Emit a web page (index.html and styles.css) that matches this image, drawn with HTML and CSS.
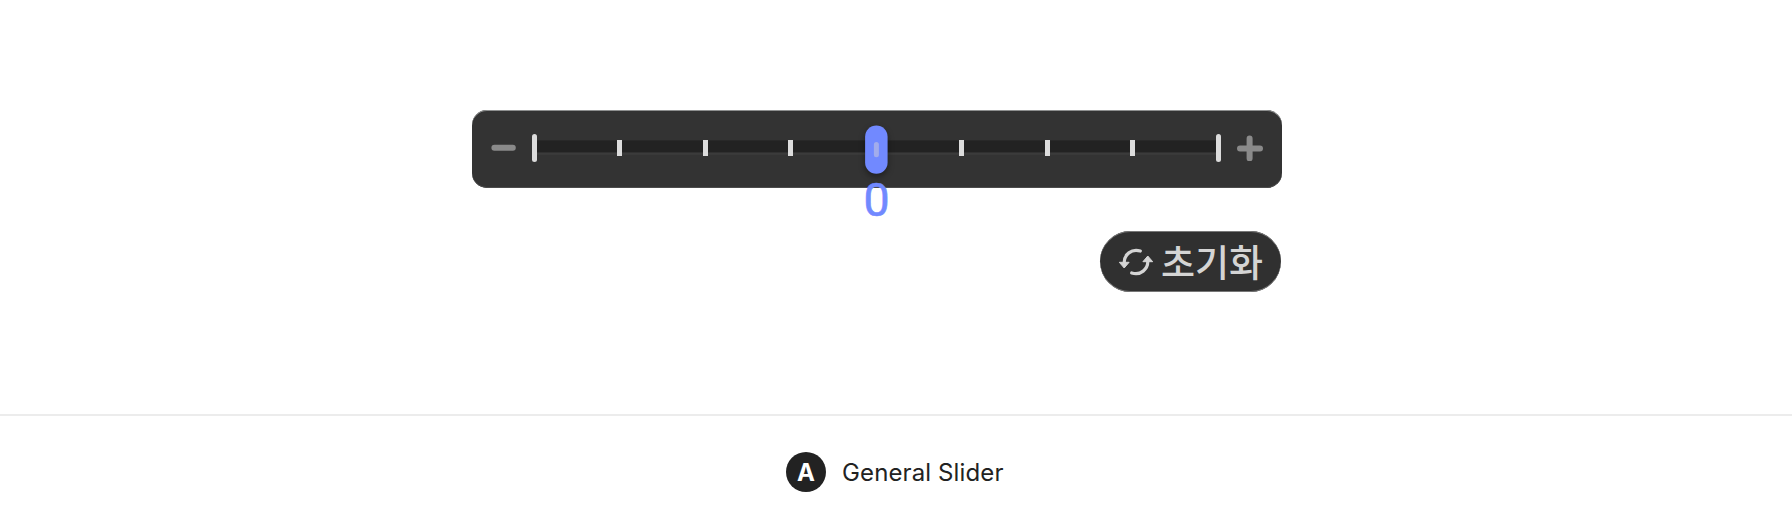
FILE: index.html
```html
<!DOCTYPE html>
<html lang="ko">
<head>
<meta charset="utf-8">
<title>General Slider</title>
<link rel="stylesheet" href="styles.css">
</head>
<body>
<main class="preview">
  <div class="control">
    <div class="slider">
      <svg class="step" width="26" height="26" viewBox="0 0 26 26"><path d="M3.4 12.8h18.4"/></svg>
      <div class="track">
        <div class="ticks">
          <i class="tick tick-end"></i><i class="tick"></i><i class="tick"></i><i class="tick"></i><i class="tick"></i><i class="tick"></i><i class="tick"></i><i class="tick"></i><i class="tick tick-end"></i>
        </div>
        <svg class="handle" width="40" height="70" viewBox="0 0 40 70">
          <rect class="knob" x="8.1" y="10.5" width="22.5" height="48.3" rx="11.25"/>
          <rect class="grip" x="16.9" y="27" width="5" height="15.2" rx="2.5"/>
        </svg>
        <span class="value">0</span>
      </div>
      <svg class="step" width="26" height="26" viewBox="0 0 26 26"><path d="M3 13.4h20M12.6 3.4v20"/></svg>
    </div>
    <button class="reset" type="button">
      <svg class="reset-icon" width="36" height="28" viewBox="0 0 36 28">
        <path class="arc" d="M6.2 15C5.9 6.8 13.5.2 22.3 3M29.8 13C30.1 21.2 22.5 27.8 13.7 25"/>
        <path class="head" d="M1.3 14.3h9.8L6.2 20zM24.9 13.7h9.8L29.8 8z"/>
      </svg>
      <span class="reset-text">초기화</span>
    </button>
  </div>
</main>
<footer class="caption">
  <span class="badge">A</span>
  <span class="label">General Slider</span>
</footer>
</body>
</html>
```
FILE: styles.css
```css
* { box-sizing: border-box; }
body {
  margin: 0;
  height: 528px;
  display: flex;
  flex-direction: column;
  background: #fff;
  font-family: Inter, "Noto Sans CJK KR", sans-serif;
}
.preview {
  height: 416px;
  padding: 110px 0 0 472px;
  border-bottom: 2px solid #ececec;
}
.control {
  width: 810px;
  display: flex;
  flex-direction: column;
  align-items: flex-end;
  gap: 43px;
}
.slider {
  width: 810px;
  height: 78px;
  padding: 0 19px;
  display: flex;
  align-items: center;
  justify-content: space-between;
  background: #333;
  border-radius: 15px;
  box-shadow: inset 0 1px #8e9090, inset 0 -1px #4c4c4c;
}
.step { display: block; flex: none; margin-bottom: 2px; }
.step path { fill: none; stroke: #8a8a8a; stroke-width: 6; stroke-linecap: round; }
.track {
  position: relative;
  width: 689px;
  height: 28px;
  margin: 0 auto 2px 15px;
  display: flex;
  align-items: center;
}
.track::before {
  content: "";
  position: absolute;
  inset: 6px 3px 7px;
  background: linear-gradient(#2b2b2b 0, #222 1.5px, #222 11.5px, #303030 12.5px, #3b3b3b 13.5px, #383838 15px);
}
.ticks {
  position: relative;
  width: 100%;
  margin-left: -.1px;
  display: flex;
  align-items: center;
  justify-content: space-between;
}
.tick { width: 5px; height: 16px; background: #dcdcdc; }
.tick-end { height: 28px; border-radius: 2.5px; }
.handle {
  position: absolute;
  left: 325px;
  top: -19px;
  overflow: visible;
}
.knob { fill: #7189ff; filter: drop-shadow(0 3px 3px rgba(0, 0, 0, .4)); }
.grip { fill: #a2acec; }
.value {
  position: absolute;
  left: 324.5px;
  top: 42px;
  width: 40px;
  text-align: center;
  font: 400 46.5px/48px Roboto, sans-serif;
  -webkit-text-stroke: .6px #7189ff;
  color: #7189ff;
}
.reset {
  width: 181px;
  height: 61px;
  margin-right: 1px;
  padding: 0 18px 0 17.5px;
  border: 0;
  border-radius: 30.5px;
  display: flex;
  align-items: center;
  justify-content: space-between;
  background: #303030;
  color: #d4d4d4;
  box-shadow: inset 0 1px #777, inset 0 -1px #777;
}
.arc { fill: none; stroke: #d4d4d4; stroke-width: 3.2; stroke-linecap: round; }
.head { fill: #d4d4d4; stroke: #d4d4d4; stroke-width: 1; stroke-linejoin: round; }
.reset-text { padding-bottom: 2px; font: 500 37px/58px "Noto Sans CJK KR", sans-serif; }
.caption {
  height: 112px;
  display: flex;
  align-items: center;
  padding-left: 786px;
  gap: 16px;
  color: #222;
  font-size: 24px;
}
.badge {
  width: 40px;
  height: 40px;
  border-radius: 50%;
  display: flex;
  align-items: center;
  justify-content: center;
  background: #222;
  color: #fff;
  font-weight: 700;
}
.label { font-weight: 400; letter-spacing: .12px; }
```
